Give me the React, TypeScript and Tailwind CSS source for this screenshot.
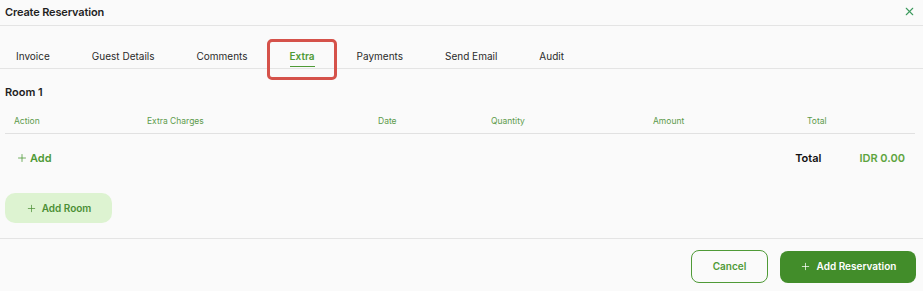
import { Plus, X } from "lucide-react";

const tabs = ["Invoice", "Guest Details", "Comments", "Extra", "Payments", "Send Email", "Audit"];

const columns = ["Action", "Extra Charges", "Date", "Quantity", "Amount", "Total"];

export default function App() {
  return (
    <div className="relative w-[923px] h-[291px] bg-[#fafafa] text-[#1f1f1f] font-['Inter',sans-serif] overflow-hidden">
      {/* Header */}
      <div className="flex items-center justify-between h-[26px] pl-[5px] pr-[7px] border-b border-[#e4e4e4]">
        <h1 className="text-[11px] font-semibold tracking-[-0.15px]">Create Reservation</h1>
        <X size={13} strokeWidth={2} className="text-[#3d9a5e] -mt-[3px]" />
      </div>

      {/* Tabs */}
      <div className="flex items-end h-[43px] pl-[4px] gap-[18px] border-b border-[#e4e4e4]">
        {tabs.map((tab) => {
          const active = tab === "Extra";
          return (
            <div key={tab} className="flex flex-col items-center px-3">
              <span
                className={`text-[10px] leading-[14px] ${
                  active ? "text-[#4f9a37] font-semibold" : "text-[#2a2a2a]"
                }`}
              >
                {tab}
              </span>
              <span
                className={`mt-[3px] mb-[1px] h-[1.5px] self-stretch ${
                  active ? "bg-[#4f9a37]" : "bg-transparent"
                }`}
              />
            </div>
          );
        })}
      </div>

      {/* highlight annotation */}
      <div className="absolute left-[267px] top-[39px] w-[70px] h-[41px] border-[3px] border-[#d5524a] rounded-[5px]" />

      {/* Room */}
      <div className="pl-[5px] pr-[8px] border-b border-[#e4e4e4] pb-[15px]">
        <h2 className="pt-[16px] text-[11px] leading-[14px] font-semibold">Room 1</h2>

        <div className="mt-[16px] pb-[6px] pl-[9px] border-b border-[#e1e1e1] grid grid-cols-[133px_231px_113px_162px_154px_1fr] text-[8.5px] leading-[12px] text-[#5d9a4c]">
          {columns.map((c) => (
            <span key={c}>{c}</span>
          ))}
        </div>

        <div className="flex items-center justify-between pt-[16px] pl-[11px] pr-[10px]">
          <button className="flex items-center gap-[2px] text-[11px] leading-[16px] font-semibold text-[#4f9a37]">
            <Plus size={12} strokeWidth={1.6} />
            Add
          </button>
          <div className="flex items-center gap-[38px] text-[11px] leading-[16px] font-semibold">
            <span className="text-[#111]">Total</span>
            <span className="text-[#5ea43f]">IDR 0.00</span>
          </div>
        </div>

        <button className="mt-[27px] flex items-center justify-center gap-[5px] w-[107px] h-[30px] rounded-[10px] bg-[#ddf3d1] text-[10px] font-semibold text-[#4b8f35]">
          <Plus size={11} strokeWidth={1.6} />
          Add Room
        </button>
      </div>

      {/* Footer */}
      <div className="flex justify-end items-center gap-[12px] pt-[11px] pr-[7px]">
        <button className="w-[77px] h-[33px] rounded-[8px] border border-[#4f9a37] text-[10px] font-semibold text-[#4f9a37]">
          Cancel
        </button>
        <button className="flex items-center justify-center gap-[6px] w-[136px] h-[32px] rounded-[8px] bg-[#428d2a] text-[10px] font-semibold text-white">
          <Plus size={11} strokeWidth={1.6} />
          Add Reservation
        </button>
      </div>
    </div>
  );
}
